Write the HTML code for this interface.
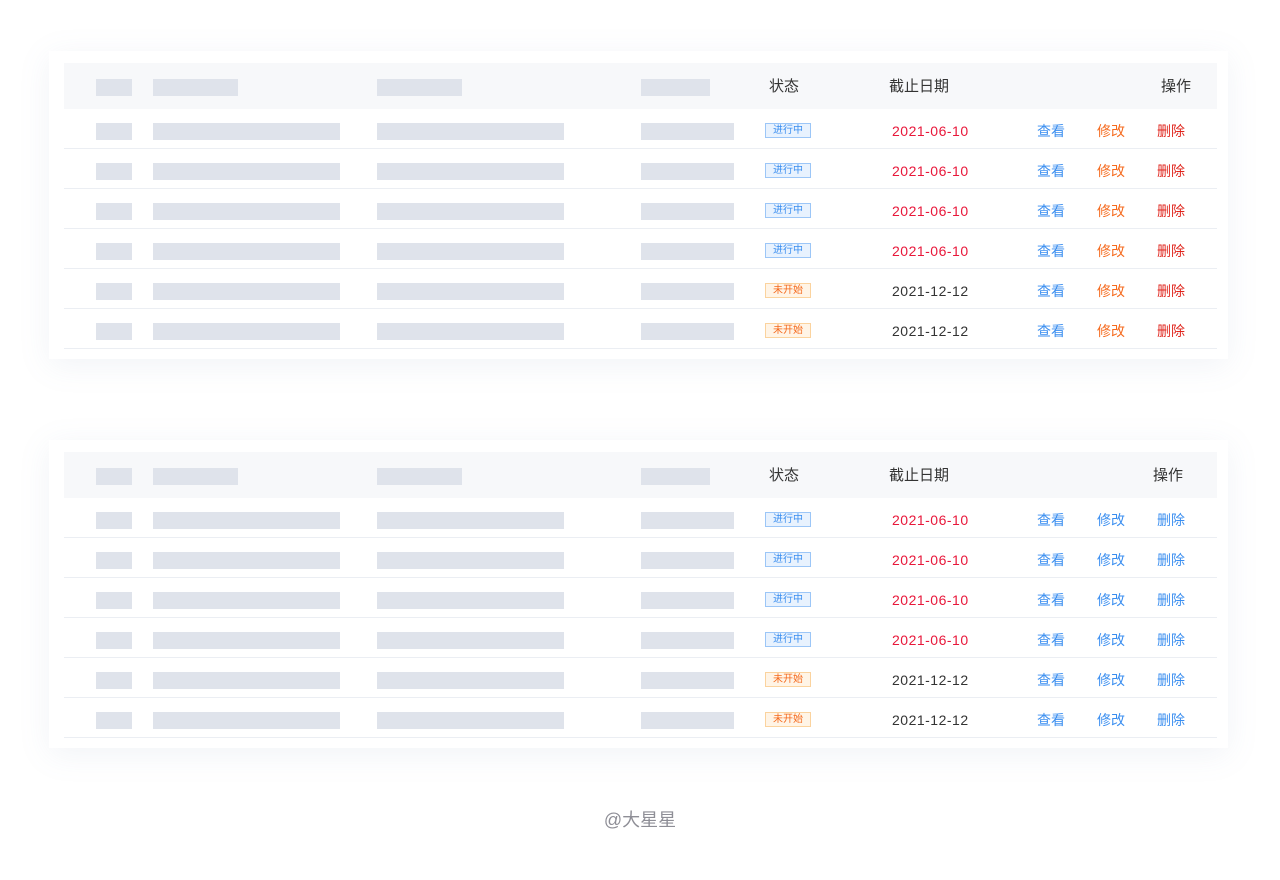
<!DOCTYPE html>
<html><head><meta charset="utf-8"><style>
*{margin:0;padding:0;box-sizing:border-box}
body{width:1280px;height:880px;background:#fff;position:relative;overflow:hidden;font-family:"Liberation Sans","Noto Sans CJK SC",sans-serif;font-size:14px;color:#333}
.card{position:absolute;left:49px;width:1179px;height:308px;background:#fff;box-shadow:0 6px 30px rgba(120,140,180,.10)}
.hd{position:absolute;left:15px;top:12px;width:1153px;height:46px;background:#f7f8fa}
.row{position:absolute;left:15px;width:1153px;height:40px;border-bottom:1px solid #ebeef3}
.b{position:absolute;height:17px;background:#dfe3eb}
.hd .b{top:16px}.row .b{top:14px}
.t{position:absolute;line-height:20px}
.hd .t{top:14px;color:#333;font-size:15px}
.row .t{top:12px}
.d{letter-spacing:0.5px}
.tag{position:absolute;left:701px;top:14px;width:46px;height:15px;font-size:10px;line-height:13px;text-align:center;border:1px solid}
.ing{color:#3a8ef0;background:#e8f2fe;border-color:#9cc6f7}
.no{color:#f56a1e;background:#fff4e6;border-color:#fbd39e}
.red{color:#e8173a}.blue{color:#3a8ef0}.or{color:#f56a1e}.dl{color:#e0261e}
.ft{position:absolute;top:806px;left:0;width:1280px;text-align:center;color:#8e8e96;font-size:18px}
</style></head><body>

<div class="card" style="top:51px">
<div class="hd"><div class="b" style="left:32px;width:36px"></div><div class="b" style="left:89px;width:85px"></div><div class="b" style="left:313px;width:85px"></div><div class="b" style="left:577px;width:69px"></div><div class="t" style="left:705px">状态</div><div class="t" style="left:825px">截止日期</div><div class="t" style="left:1097px">操作</div></div>
<div class="row" style="top:58px"><div class="b" style="left:32px;width:36px"></div><div class="b" style="left:89px;width:187px"></div><div class="b" style="left:313px;width:187px"></div><div class="b" style="left:577px;width:93px"></div><div class="tag ing">进行中</div><div class="t red d" style="left:828px">2021-06-10</div><div class="t blue" style="left:973px">查看</div><div class="t or" style="left:1033px">修改</div><div class="t dl" style="left:1093px">删除</div></div>
<div class="row" style="top:98px"><div class="b" style="left:32px;width:36px"></div><div class="b" style="left:89px;width:187px"></div><div class="b" style="left:313px;width:187px"></div><div class="b" style="left:577px;width:93px"></div><div class="tag ing">进行中</div><div class="t red d" style="left:828px">2021-06-10</div><div class="t blue" style="left:973px">查看</div><div class="t or" style="left:1033px">修改</div><div class="t dl" style="left:1093px">删除</div></div>
<div class="row" style="top:138px"><div class="b" style="left:32px;width:36px"></div><div class="b" style="left:89px;width:187px"></div><div class="b" style="left:313px;width:187px"></div><div class="b" style="left:577px;width:93px"></div><div class="tag ing">进行中</div><div class="t red d" style="left:828px">2021-06-10</div><div class="t blue" style="left:973px">查看</div><div class="t or" style="left:1033px">修改</div><div class="t dl" style="left:1093px">删除</div></div>
<div class="row" style="top:178px"><div class="b" style="left:32px;width:36px"></div><div class="b" style="left:89px;width:187px"></div><div class="b" style="left:313px;width:187px"></div><div class="b" style="left:577px;width:93px"></div><div class="tag ing">进行中</div><div class="t red d" style="left:828px">2021-06-10</div><div class="t blue" style="left:973px">查看</div><div class="t or" style="left:1033px">修改</div><div class="t dl" style="left:1093px">删除</div></div>
<div class="row" style="top:218px"><div class="b" style="left:32px;width:36px"></div><div class="b" style="left:89px;width:187px"></div><div class="b" style="left:313px;width:187px"></div><div class="b" style="left:577px;width:93px"></div><div class="tag no">未开始</div><div class="t d" style="left:828px">2021-12-12</div><div class="t blue" style="left:973px">查看</div><div class="t or" style="left:1033px">修改</div><div class="t dl" style="left:1093px">删除</div></div>
<div class="row" style="top:258px"><div class="b" style="left:32px;width:36px"></div><div class="b" style="left:89px;width:187px"></div><div class="b" style="left:313px;width:187px"></div><div class="b" style="left:577px;width:93px"></div><div class="tag no">未开始</div><div class="t d" style="left:828px">2021-12-12</div><div class="t blue" style="left:973px">查看</div><div class="t or" style="left:1033px">修改</div><div class="t dl" style="left:1093px">删除</div></div>
</div>

<div class="card" style="top:440px">
<div class="hd"><div class="b" style="left:32px;width:36px"></div><div class="b" style="left:89px;width:85px"></div><div class="b" style="left:313px;width:85px"></div><div class="b" style="left:577px;width:69px"></div><div class="t" style="left:705px">状态</div><div class="t" style="left:825px">截止日期</div><div class="t" style="left:1089px">操作</div></div>
<div class="row" style="top:58px"><div class="b" style="left:32px;width:36px"></div><div class="b" style="left:89px;width:187px"></div><div class="b" style="left:313px;width:187px"></div><div class="b" style="left:577px;width:93px"></div><div class="tag ing">进行中</div><div class="t red d" style="left:828px">2021-06-10</div><div class="t blue" style="left:973px">查看</div><div class="t blue" style="left:1033px">修改</div><div class="t blue" style="left:1093px">删除</div></div>
<div class="row" style="top:98px"><div class="b" style="left:32px;width:36px"></div><div class="b" style="left:89px;width:187px"></div><div class="b" style="left:313px;width:187px"></div><div class="b" style="left:577px;width:93px"></div><div class="tag ing">进行中</div><div class="t red d" style="left:828px">2021-06-10</div><div class="t blue" style="left:973px">查看</div><div class="t blue" style="left:1033px">修改</div><div class="t blue" style="left:1093px">删除</div></div>
<div class="row" style="top:138px"><div class="b" style="left:32px;width:36px"></div><div class="b" style="left:89px;width:187px"></div><div class="b" style="left:313px;width:187px"></div><div class="b" style="left:577px;width:93px"></div><div class="tag ing">进行中</div><div class="t red d" style="left:828px">2021-06-10</div><div class="t blue" style="left:973px">查看</div><div class="t blue" style="left:1033px">修改</div><div class="t blue" style="left:1093px">删除</div></div>
<div class="row" style="top:178px"><div class="b" style="left:32px;width:36px"></div><div class="b" style="left:89px;width:187px"></div><div class="b" style="left:313px;width:187px"></div><div class="b" style="left:577px;width:93px"></div><div class="tag ing">进行中</div><div class="t red d" style="left:828px">2021-06-10</div><div class="t blue" style="left:973px">查看</div><div class="t blue" style="left:1033px">修改</div><div class="t blue" style="left:1093px">删除</div></div>
<div class="row" style="top:218px"><div class="b" style="left:32px;width:36px"></div><div class="b" style="left:89px;width:187px"></div><div class="b" style="left:313px;width:187px"></div><div class="b" style="left:577px;width:93px"></div><div class="tag no">未开始</div><div class="t d" style="left:828px">2021-12-12</div><div class="t blue" style="left:973px">查看</div><div class="t blue" style="left:1033px">修改</div><div class="t blue" style="left:1093px">删除</div></div>
<div class="row" style="top:258px"><div class="b" style="left:32px;width:36px"></div><div class="b" style="left:89px;width:187px"></div><div class="b" style="left:313px;width:187px"></div><div class="b" style="left:577px;width:93px"></div><div class="tag no">未开始</div><div class="t d" style="left:828px">2021-12-12</div><div class="t blue" style="left:973px">查看</div><div class="t blue" style="left:1033px">修改</div><div class="t blue" style="left:1093px">删除</div></div>
</div>

<div class="ft">@大星星</div>
</body></html>
